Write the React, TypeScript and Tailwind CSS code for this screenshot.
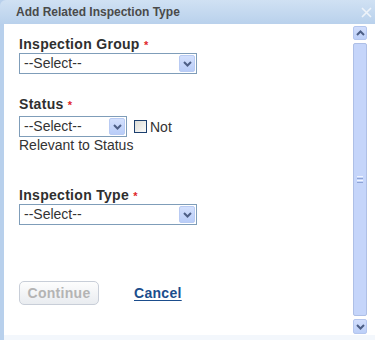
const font = { fontFamily: '"Liberation Sans", Arial, sans-serif' };

function Chevron({ up = false }: { up?: boolean }) {
  return (
    <svg width="9" height="6" viewBox="0 0 9 6" className={up ? "rotate-180" : ""}>
      <path d="M1 1 L4.5 4.5 L8 1" fill="none" stroke="#4d5f86" strokeWidth="2" />
    </svg>
  );
}

function Select({ width }: { width: string }) {
  return (
    <div className={`flex h-[21px] items-stretch border border-[#7f9db9] bg-white ${width}`}>
      <span className="flex-1 pl-[4px] text-[14px] leading-[19px] text-[#333]">--Select--</span>
      <span className="m-[1px] flex w-[16px] items-center justify-center rounded-[2px] border border-[#b9cbf3] bg-[linear-gradient(180deg,#d3e0fd,#b9cdf8)]">
        <Chevron />
      </span>
    </div>
  );
}

function Label({ text }: { text: string }) {
  return (
    <p className="text-[14px] font-bold leading-[16px] tracking-[0.3px] text-[#2f2f2f]">
      {text} <span className="text-[11px] text-[#e0262a]">*</span>
    </p>
  );
}

export default function App() {
  return (
    <div style={font} className="flex h-[340px] w-[375px] flex-col overflow-hidden bg-[#b8d0ec]">
      {/* title bar */}
      <div className="flex h-[24px] items-center justify-between rounded-tl-[6px] bg-[linear-gradient(180deg,#d0e1f3,#b9d1ec)] pl-[16px] pr-[3px]">
        <span className="text-[12px] font-bold text-[#4a4a4a]">Add Related Inspection Type</span>
        <svg width="11" height="11" viewBox="0 0 11 11">
          <path d="M1 1 L10 10 M10 1 L1 10" stroke="#eef3f9" strokeWidth="1.6" />
        </svg>
      </div>

      <div className="ml-[4px] flex flex-1 flex-col bg-white">
        <div className="flex flex-1">
          {/* form */}
          <div className="flex-1 pl-[15px] pt-[12px]">
            <Label text="Inspection Group" />
            <Select width="w-[178px]" />

            <div className="mt-[22px]">
              <Label text="Status" />
            </div>
            <div className="mt-[3px] flex items-center">
              <Select width="w-[108px]" />
              <span className="ml-[7px] h-[13px] w-[13px] border border-[#1c3f6e] bg-[linear-gradient(135deg,#dcdcd6,#fbfbfa)]" />
              <span className="ml-[3px] text-[14px] leading-[16px] text-[#333]">Not</span>
            </div>
            <p className="text-[14px] leading-[16px] text-[#333]">Relevant to Status</p>

            <div className="mt-[34px]">
              <Label text="Inspection Type" />
            </div>
            <Select width="w-[178px]" />

            <div className="mt-[56px] flex items-center">
              <button
                type="button"
                disabled
                className="h-[24px] w-[80px] rounded-[5px] border border-[#c8ced8] bg-[linear-gradient(180deg,#fdfdfd,#e9ecf0)] text-[14px] font-bold tracking-[0.3px] text-[#b4b4b4]"
              >
                Continue
              </button>
              <a href="#" className="ml-[35px] text-[14px] font-bold tracking-[0.3px] text-[#1b4d8c] underline underline-offset-2">
                Cancel
              </a>
            </div>
          </div>

          {/* scrollbar */}
          <div className="mr-[8px] flex w-[14px] flex-col pt-[2px]">
            <div className="flex h-[14px] items-center justify-center rounded-[2px] border border-[#b4c6ee] bg-[linear-gradient(180deg,#d2defc,#bccff8)]">
              <Chevron up />
            </div>
            <div className="mt-[3px] flex flex-1 items-center justify-center rounded-[2px] border border-[#aebfe6] bg-[#c5d5fa]">
              <div className="flex flex-col gap-[1px]">
                <span className="h-[1px] w-[6px] bg-[#eef3ff]" />
                <span className="h-[1px] w-[6px] bg-[#8ea4d6]" />
                <span className="h-[1px] w-[6px] bg-[#eef3ff]" />
                <span className="h-[1px] w-[6px] bg-[#8ea4d6]" />
              </div>
            </div>
            <div className="mb-[1px] mt-[3px] flex h-[15px] items-center justify-center rounded-[2px] border border-[#b4c6ee] bg-[linear-gradient(180deg,#d2defc,#bccff8)]">
              <Chevron />
            </div>
          </div>
        </div>
        <div className="h-[5px] bg-[#f3f7fc]" />
      </div>
    </div>
  );
}
